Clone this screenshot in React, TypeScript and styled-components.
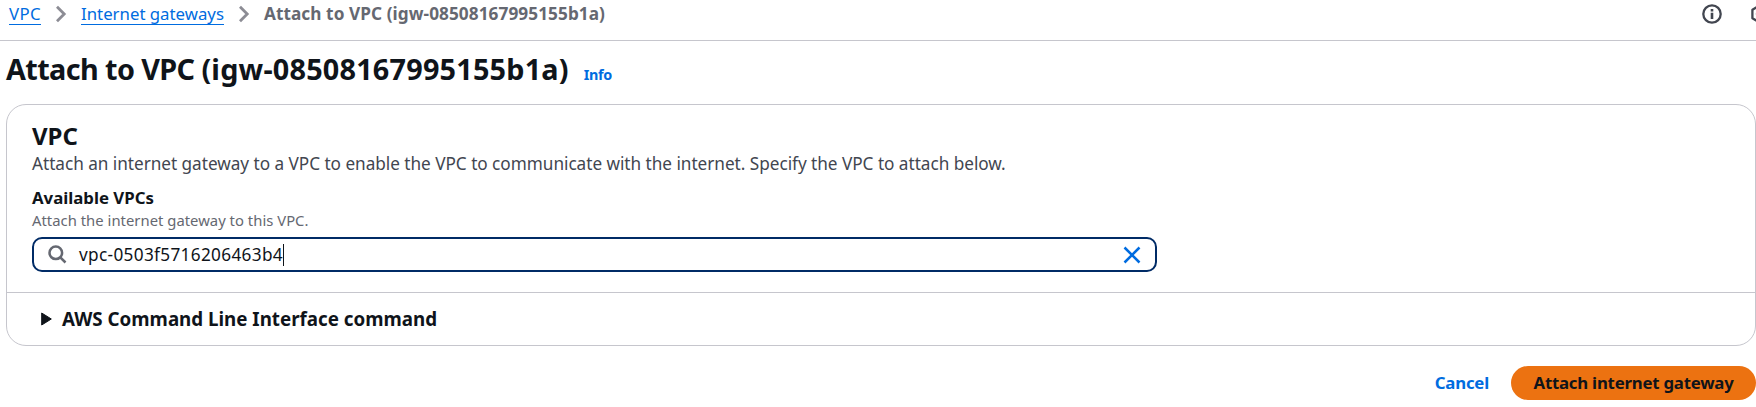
import React from "react";
import styled, { createGlobalStyle } from "styled-components";

const GlobalStyle = createGlobalStyle`
  *, *::before, *::after { box-sizing: border-box; }
  html, body { margin: 0; overflow: hidden; background: #fff; }
  body { font-family: "Noto Sans", "Open Sans", sans-serif; color: #0f141a; }
  h1, h2, p { margin: 0; }
  svg { display: block; flex: none; }
`;

const Page = styled.div`
  width: 1756px;
  height: 407px;
  overflow: hidden;
`;

const TopBar = styled.header`
  display: flex;
  justify-content: space-between;
  align-items: flex-start;
  height: 41px;
  padding: 2px 0 0 9px;
  border-bottom: 1px solid #c6c6cd;
  overflow: hidden;
`;

const Breadcrumbs = styled.nav`
  display: flex;
  align-items: flex-start;
  line-height: 24px;
`;

const Crumb = styled.a<{ $tracking?: number }>`
  height: 23px;
  border-bottom: 1px solid #006ce0;
  color: #006ce0;
  font-size: 16.8px;
  letter-spacing: ${(p) => p.$tracking ?? 0}px;
  text-decoration: none;
  white-space: nowrap;
`;

const CurrentCrumb = styled.span`
  color: #656871;
  font-size: 17.2px;
  font-weight: 700;
  letter-spacing: 0.08px;
  white-space: nowrap;
`;

const Separator = styled.span`
  display: flex;
  width: 40px;
  padding: 3px 0 0 14px;
`;

const HelpTools = styled.div`
  display: flex;
  gap: 28px;
  width: 54px;
  padding-top: 2px;
  overflow: hidden;
  color: #424650;
`;

const TitleRow = styled.div`
  display: flex;
  align-items: baseline;
  gap: 15px;
  height: 63px;
  padding: 10px 0 0 6px;
`;

const Title = styled.h1`
  font-size: 28.8px;
  line-height: 36px;
  font-weight: 700;
  letter-spacing: -0.6px;
  white-space: nowrap;
`;

const ResourceId = styled.span`
  letter-spacing: 0.2px;
`;

const InfoLink = styled.a`
  color: #006ce0;
  font-size: 14.4px;
  font-weight: 700;
  letter-spacing: -0.3px;
`;

const Card = styled.section`
  width: 1750px;
  height: 242px;
  margin-left: 6px;
  border: 1px solid #c6c6cd;
  border-radius: 20px;
`;

const CardBody = styled.div`
  height: 188px;
  padding: 16px 25px 0;
  border-bottom: 1px solid #c6c6cd;
`;

const SectionTitle = styled.h2`
  font-size: 24px;
  line-height: 30px;
  font-weight: 700;
`;

const Description = styled.p`
  margin-top: 1px;
  color: #424650;
  font-size: 17.2px;
  line-height: 24px;
  letter-spacing: -0.03px;
`;

const FieldLabel = styled.label`
  display: block;
  margin-top: 10px;
  font-size: 16.8px;
  line-height: 24px;
  font-weight: 700;
`;

const Hint = styled.p`
  color: #656871;
  font-size: 14.8px;
  line-height: 20px;
  letter-spacing: 0.03px;
`;

const SearchBox = styled.div`
  display: flex;
  align-items: center;
  width: 1125px;
  height: 35px;
  margin-top: 7px;
  padding: 0 14px;
  border: 2px solid #002b66;
  border-radius: 10px;
`;

const Query = styled.span`
  margin-left: 12px;
  font-size: 17.2px;
  line-height: 24px;
  letter-spacing: 0.33px;
`;

const Caret = styled.span`
  width: 1px;
  height: 22px;
  margin-right: auto;
  background: #0f141a;
`;

const Expander = styled.div`
  display: flex;
  align-items: center;
  gap: 10px;
  height: 52px;
  padding-left: 34px;
  font-size: 18.75px;
  line-height: 24px;
  font-weight: 700;
`;

const Actions = styled.footer`
  display: flex;
  justify-content: flex-end;
  gap: 22px;
  padding-top: 20px;
`;

const Button = styled.button<{ $primary?: boolean }>`
  height: 34px;
  width: ${(p) => (p.$primary ? "245px" : "auto")};
  padding: 0;
  border: 0;
  border-radius: 17px;
  background: ${(p) => (p.$primary ? "#ec7211" : "transparent")};
  color: ${(p) => (p.$primary ? "#0f141a" : "#006ce0")};
  font: 700 16.8px/24px "Noto Sans", "Open Sans", sans-serif;
  letter-spacing: ${(p) => (p.$primary ? -0.22 : -0.2)}px;
  white-space: nowrap;
`;

const Chevron = () => (
  <Separator>
    <svg width="12" height="18" viewBox="0 0 12 18" fill="none" stroke="#8c8c94" strokeWidth="2.8">
      <path d="M2 1.8 9.2 9 2 16.2" />
    </svg>
  </Separator>
);

export default function App() {
  return (
    <Page>
      <GlobalStyle />
      <TopBar>
        <Breadcrumbs>
          <Crumb $tracking={0.4}>VPC</Crumb>
          <Chevron />
          <Crumb>Internet gateways</Crumb>
          <Chevron />
          <CurrentCrumb>Attach to VPC (igw-08508167995155b1a)</CurrentCrumb>
        </Breadcrumbs>
        <HelpTools>
          <svg width="20" height="20" viewBox="0 0 20 20" fill="none" stroke="currentColor" strokeWidth="2.3">
            <circle cx="10" cy="10" r="8.7" />
            <path d="M10 8.8V15M10 5v2.4" strokeWidth="2.6" />
          </svg>
          <svg width="20" height="20" viewBox="0 0 20 20" fill="none" stroke="currentColor" strokeWidth="2.3" strokeLinejoin="round">
            <path d="M10 1.2 2.4 5.7v8.6L10 18.8l7.6-4.5V5.7z" />
            <circle cx="10" cy="10" r="3" />
          </svg>
        </HelpTools>
      </TopBar>
      <TitleRow>
        <Title>
          Attach to VPC <ResourceId>(igw-08508167995155b1a)</ResourceId>
        </Title>
        <InfoLink>Info</InfoLink>
      </TitleRow>
      <Card>
        <CardBody>
          <SectionTitle>VPC</SectionTitle>
          <Description>
            Attach an internet gateway to a VPC to enable the VPC to communicate with the internet. Specify the VPC to
            attach below.
          </Description>
          <FieldLabel>Available VPCs</FieldLabel>
          <Hint>Attach the internet gateway to this VPC.</Hint>
          <SearchBox>
            <svg width="19" height="19" viewBox="0 0 19 19" fill="none" stroke="#656871" strokeWidth="2.5">
              <circle cx="7.8" cy="7.8" r="6.3" />
              <path d="m12.3 12.3 5.2 5.2" />
            </svg>
            <Query>vpc-0503f5716206463b4</Query>
            <Caret />
            <svg width="18" height="18" viewBox="0 0 18 18" fill="none" stroke="#006ce0" strokeWidth="2.5">
              <path d="m1.5 1.5 15 15m0-15-15 15" />
            </svg>
          </SearchBox>
        </CardBody>
        <Expander>
          <svg width="11" height="14" viewBox="0 0 11 14" fill="#0f141a" stroke="#0f141a" strokeLinejoin="round">
            <path d="M.7 1v12L10.3 7z" />
          </svg>
          AWS Command Line Interface command
        </Expander>
      </Card>
      <Actions>
        <Button>Cancel</Button>
        <Button $primary>Attach internet gateway</Button>
      </Actions>
    </Page>
  );
}
